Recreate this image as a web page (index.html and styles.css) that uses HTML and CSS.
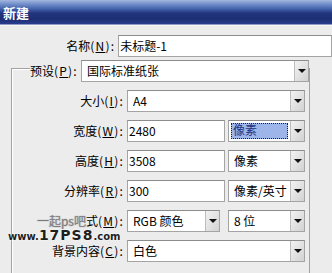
FILE: index.html
```html
<!DOCTYPE html>
<html>
<head>
    <meta charset="utf-8">
    <link rel="stylesheet" href="styles.css">
    <title>新建</title>
</head>
<body>
    <div class="titlebar">新建</div>

    <div class="form">
        <div class="row row-name">
            <label class="label label-name">名称<span class="key">(<u>N</u>):</span></label>
            <div class="field field-name">未标题-1</div>
        </div>

        <div class="group">
            <div class="row row-preset">
                <label class="label label-preset">预设<span class="key">(<u>P</u>):</span></label>
                <div class="select select-preset"><span class="value">国际标准纸张</span><span class="arrow"></span></div>
            </div>

            <div class="row">
                <label class="label">大小<span class="key">(<u>I</u>):</span></label>
                <div class="select select-wide"><span class="value">A4</span><span class="arrow"></span></div>
            </div>

            <div class="row">
                <label class="label">宽度<span class="key">(<u>W</u>):</span></label>
                <div class="field field-num">2480</div>
                <div class="select select-unit"><span class="value value-selected">像素</span><span class="arrow"></span></div>
            </div>

            <div class="row">
                <label class="label">高度<span class="key">(<u>H</u>):</span></label>
                <div class="field field-num">3508</div>
                <div class="select select-unit"><span class="value">像素</span><span class="arrow"></span></div>
            </div>

            <div class="row">
                <label class="label">分辨率<span class="key">(<u>R</u>):</span></label>
                <div class="field field-num">300</div>
                <div class="select select-unit"><span class="value">像素/英寸</span><span class="arrow"></span></div>
            </div>

            <div class="row">
                <label class="label"><span class="wm-cn">一起ps吧</span>式<span class="key">(<u>M</u>):</span></label>
                <div class="select select-mode"><span class="value">RGB 颜色</span><span class="arrow"></span></div>
                <div class="select select-unit"><span class="value">8 位</span><span class="arrow"></span></div>
            </div>

            <div class="row">
                <label class="label">背景内容<span class="key">(<u>C</u>):</span></label>
                <div class="select select-wide"><span class="value">白色</span><span class="arrow"></span></div>
            </div>
        </div>
    </div>

    <div class="watermark">www.<span class="wm-big">17PS8</span>.com</div>
</body>
</html>
```

FILE: styles.css
```css
* {
    box-sizing: border-box;
}

body {
    margin: 0;
    width: 332px;
    height: 273px;
    overflow: hidden;
    position: relative;
    background: #ececec;
    font-family: "Noto Sans CJK SC", "Liberation Sans", sans-serif;
    font-size: 12px;
    color: #000;
}

.titlebar {
    height: 26px;
    padding-left: 3px;
    line-height: 25px;
    font-size: 13px;
    font-weight: bold;
    color: #fff;
    background: linear-gradient(to bottom, #a2b7de 0px, #7390cc 4px, #4262aa 9px, #22367e 13px, #1c2e72 19px, #2a3d8e 24px, #f6f6f6 25px);
}

.form {
    padding-top: 9px;
}

.row {
    display: flex;
    height: 22px;
    margin-top: 8px;
}

.row-name {
    margin-top: 0;
}

.label {
    width: 115px;
    padding-right: 3px;
    text-align: right;
    line-height: 22px;
    white-space: nowrap;
}

.label-name {
    width: 127px;
}

.key {
    letter-spacing: 1.2px;
}

.field,
.select {
    height: 22px;
    line-height: 20px;
    background: #fff;
    border: 1px solid #a4a4a4;
    border-top-color: #8c8c8c;
    white-space: nowrap;
}

.field {
    padding-left: 1px;
}

.field-name {
    width: 230px;
}

.field-num {
    width: 98px;
}

.select {
    display: flex;
    justify-content: space-between;
}

.value {
    padding-left: 5px;
}

.value-selected {
    margin: 2px 0 0 2px;
    padding-left: 2px;
    width: 57px;
    height: 16px;
    line-height: 14px;
    background: #9db5e8;
    color: #1b3484;
    outline: 1px dotted #222;
    outline-offset: -1px;
}

.arrow {
    width: 14px;
    height: 20px;
    border-left: 1px solid #bdbdbd;
    background: linear-gradient(to bottom right, #f2f2f2, #d2d2d2);
    display: flex;
    align-items: center;
    justify-content: center;
}

.arrow::after {
    content: "";
    border-left: 4px solid transparent;
    border-right: 4px solid transparent;
    border-top: 4px solid #111;
}

.group {
    margin: 11px 0 0 11px;
    width: 299px;
    height: 205px;
    border: 1px solid #a2a2a2;
    border-bottom: none;
    box-shadow: inset 1px 1px 0 #fff;
}

.row-preset {
    margin-top: -9px;
}

.label-preset {
    width: 52px;
    margin-left: 18px;
    background: #ececec;
}

.select-preset {
    width: 237px;
}

.select-wide {
    width: 178px;
}

.select-unit {
    width: 77px;
    margin-left: 3px;
}

.select-mode {
    width: 93px;
    margin-right: 5px;
}

.wm-cn {
    color: #7a7a7a;
    text-shadow: 0 0 1px #fff, 0 0 1px #444;
}

.watermark {
    position: absolute;
    left: 8px;
    top: 229px;
    line-height: 12px;
    font-family: "DejaVu Sans", sans-serif;
    font-size: 10px;
    font-weight: bold;
    color: #1e1e1e;
    text-shadow: 0 0 2px #fff, 0 0 1px #fff;
}

.wm-big {
    font-size: 14px;
    font-weight: 900;
    letter-spacing: 1px;
}
```
